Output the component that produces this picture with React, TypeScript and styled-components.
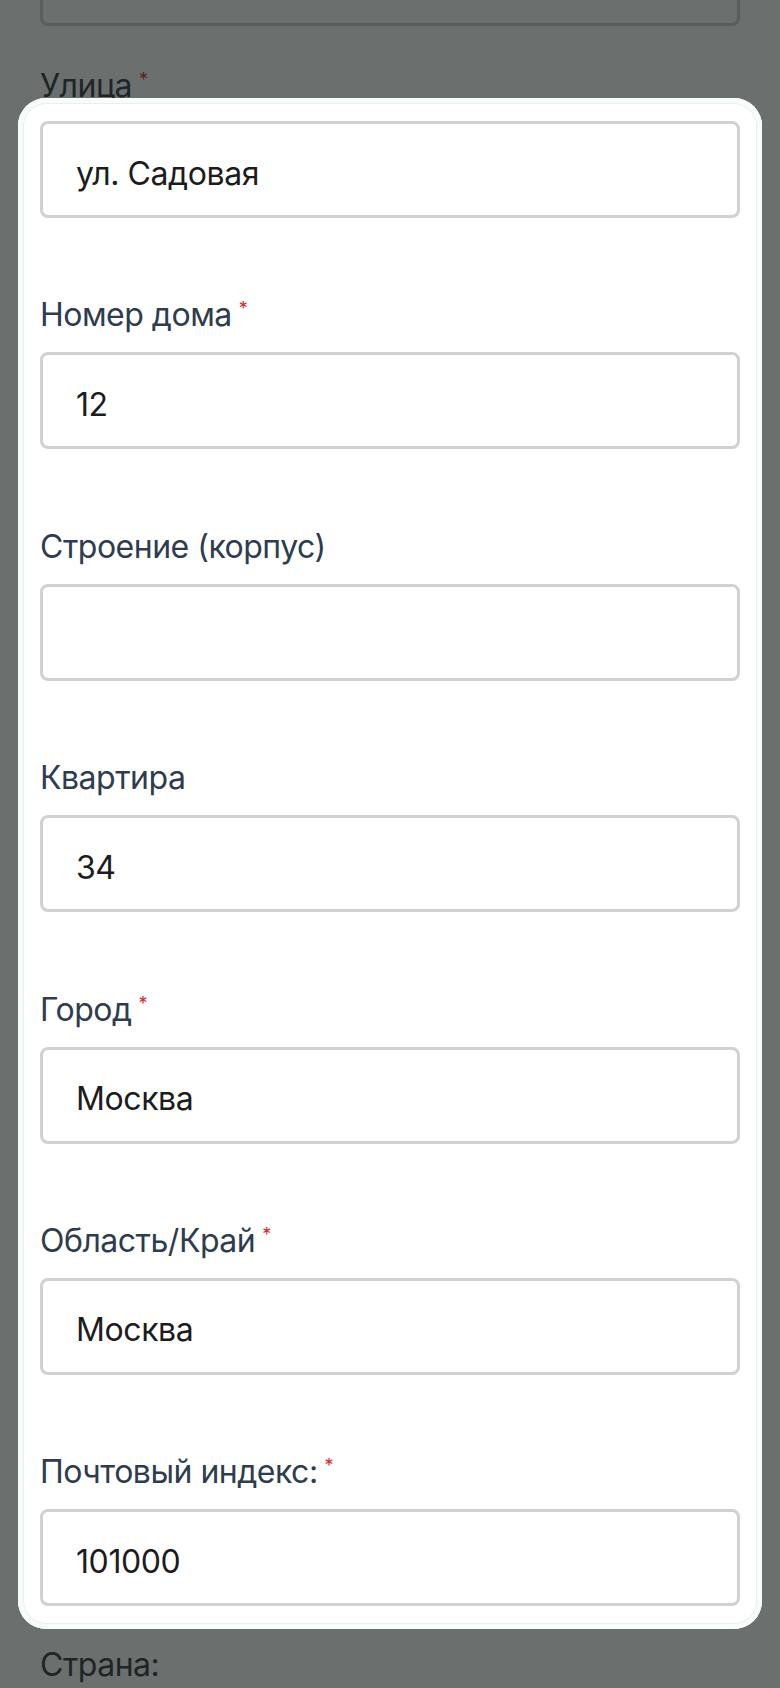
import React from "react";
import styled, { createGlobalStyle } from "styled-components";

const GlobalStyle = createGlobalStyle`
  html, body {
    margin: 0;
    padding: 0;
    background: #6b706e;
    font-family: Inter, "Noto Sans", sans-serif;
  }
  * {
    box-sizing: border-box;
  }
`;

const Page = styled.div`
  min-height: 100vh;
  overflow: hidden;
  background: #6b706e;
`;

const DimInput = styled.div`
  height: 26px;
  margin: 0 40px;
  border: 3px solid #595e5c;
  border-top: none;
  border-radius: 0 0 8px 8px;
`;

const DimLabel = styled.div<{ $top: number }>`
  margin: ${(p) => p.$top}px 40px 0;
  font-size: 32px;
  line-height: 40px;
  letter-spacing: -0.5px;
  color: #1f2527;
`;

const Star = styled.span<{ $dim?: boolean }>`
  margin-left: 7px;
  font-size: 18px;
  line-height: 1;
  vertical-align: 11px;
  color: ${(p) => (p.$dim ? "#5e2020" : "#d62828")};
`;

const Card = styled.div`
  position: relative;
  z-index: 1;
  margin: -8.4px 18px 0;
  padding: 23px 22px;
  background: #ffffff;
  border-radius: 28px;
  box-shadow: inset 0 0 0 5px #fafbfb, inset 0 0 0 6px #eceeed;
  display: flex;
  flex-direction: column;
  gap: 77.4px;
`;

const Field = styled.div`
  display: flex;
  flex-direction: column;
`;

const Label = styled.label`
  font-size: 32px;
  line-height: 40px;
  letter-spacing: -0.5px;
  margin-bottom: 17px;
  color: #2e3c4d;
`;

const Input = styled.input`
  width: 100%;
  height: 97px;
  padding: 7px 33px 0;
  border: 3px solid #d1d1d1;
  border-radius: 8px;
  background: #ffffff;
  font-family: Inter, "Noto Sans", sans-serif;
  font-size: 32px;
  letter-spacing: -0.4px;
  color: #1c1c1c;
  outline: none;
`;

type FieldData = { label?: string; required?: boolean; value: string };

const fields: FieldData[] = [
  { value: "ул. Садовая" },
  { label: "Номер дома", required: true, value: "12" },
  { label: "Строение (корпус)", value: "" },
  { label: "Квартира", value: "34" },
  { label: "Город", required: true, value: "Москва" },
  { label: "Область/Край", required: true, value: "Москва" },
  { label: "Почтовый индекс:", required: true, value: "101000" },
];

function App() {
  return (
    <Page>
      <GlobalStyle />
      <DimInput />
      <DimLabel $top={40.4}>
        Улица<Star $dim>*</Star>
      </DimLabel>
      <Card>
        {fields.map((f, i) => (
          <Field key={i}>
            {f.label && (
              <Label>
                {f.label}
                {f.required && <Star>*</Star>}
              </Label>
            )}
            <Input defaultValue={f.value} readOnly />
          </Field>
        ))}
      </Card>
      <DimLabel $top={16}>Страна:</DimLabel>
    </Page>
  );
}

export default App;
